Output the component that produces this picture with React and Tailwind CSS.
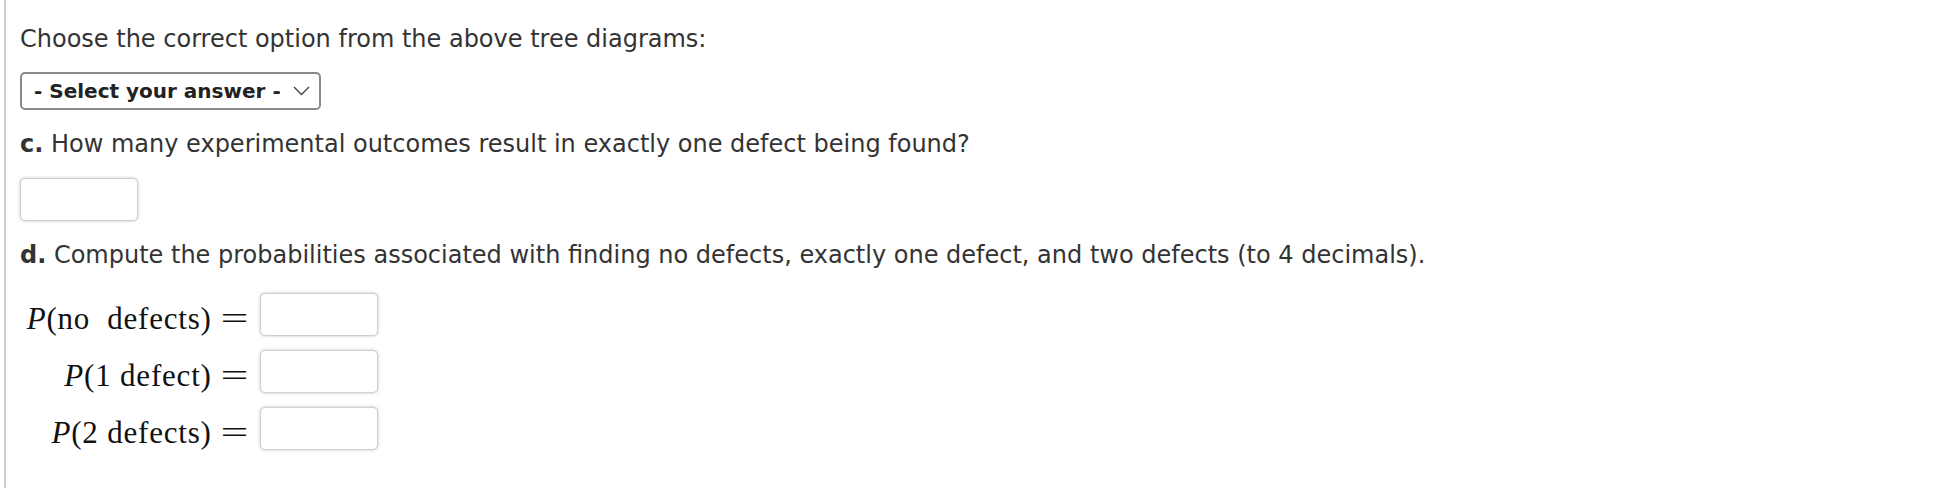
import React from "react";

const AnswerBox = () => (
  <div className="w-[118px] h-[43px] rounded-[5px] border border-[#cfcfcf] bg-white shadow-[0_0_3px_rgba(0,0,0,0.25)]" />
);

const MathRow = ({ children }) => (
  <div className="flex items-center h-[43px]">
    <div className="w-[240px] flex justify-end items-center pr-[16px] pt-[8px] text-[31px] leading-[36px] tracking-[0.8px] text-[#111]" style={{ fontFamily: '"Liberation Serif", "DejaVu Serif", serif' }}>
      {children}
      <span className="ml-[14px] inline-block scale-x-[1.6]">=</span>
    </div>
    <AnswerBox />
  </div>
);

const App = () => {
  return (
    <div className="w-[1950px] h-[488px] bg-white pl-[4px]">
      <div className="h-full border-l-2 border-[#d0d0d0] pl-[14px] text-[#333] text-[24px] leading-[28px]" style={{ fontFamily: '"DejaVu Sans", Verdana, sans-serif' }}>
        {/* b. select */}
        <p className="pt-[25px]">Choose the correct option from the above tree diagrams:</p>
        <div className="mt-[19px] w-[301px] h-[38px] rounded-[5px] border-2 border-[#8a8a8a] flex items-center justify-between pl-[12px] pr-[9px] text-[20px] font-bold text-[#222]">
          <span>- Select your answer -</span>
          <svg width="17" height="10" viewBox="0 0 17 10" fill="none">
            <polyline points="1,1 8.5,8.5 16,1" stroke="#444" strokeWidth="1.4" />
          </svg>
        </div>

        {/* c. */}
        <p className="mt-[20px]"><span className="font-bold">c.</span> How many experimental outcomes result in exactly one defect being found?</p>
        <div className="mt-[20px]">
          <AnswerBox />
        </div>

        {/* d. */}
        <p className="mt-[20px]"><span className="font-bold">d.</span> Compute the probabilities associated with finding no defects, exactly one defect, and two defects (to 4 decimals).</p>
        <div className="mt-[24px] flex flex-col gap-[14px]">
          <MathRow><i>P</i>(no&nbsp;&nbsp;defects)</MathRow>
          <MathRow><i>P</i>(1 defect)</MathRow>
          <MathRow><i>P</i>(2 defects)</MathRow>
        </div>
      </div>
    </div>
  );
};

export default App;
